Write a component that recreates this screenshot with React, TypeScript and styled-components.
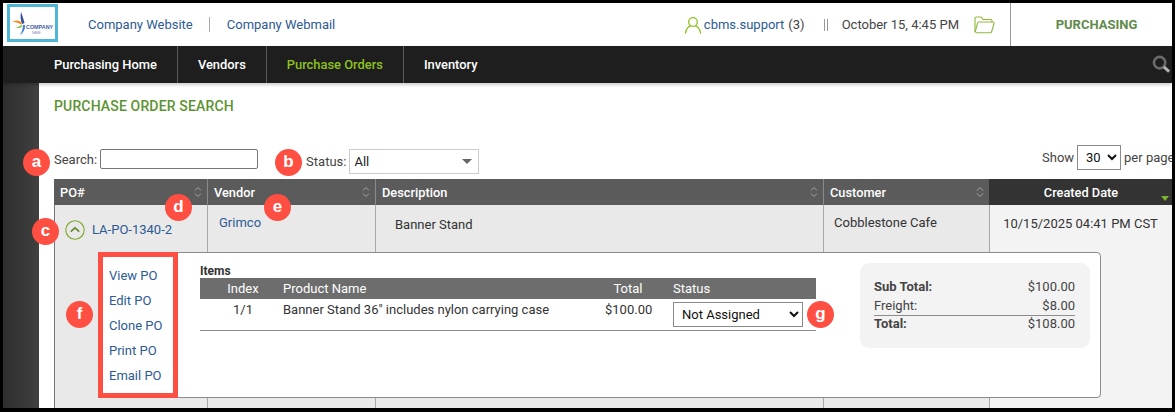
import { createGlobalStyle, styled } from 'styled-components';

const GlobalStyle = createGlobalStyle`
  html, body {
    margin: 0;
    padding: 0;
    background: #000;
  }
  body {
    font-family: Roboto, "Liberation Sans", sans-serif;
    font-size: 13px;
    color: #333;
  }
  * {
    box-sizing: border-box;
  }
`;

const Frame = styled.div`
  position: relative;
  width: 1175px;
  height: 412px;
  border: solid #000;
  border-width: 3px 3px 4px 3px;
  overflow: hidden;
  background: #fff;
  display: flex;
  flex-direction: column;
`;

const Header = styled.header`
  display: flex;
  align-items: center;
  height: 43px;
  flex: none;
`;

const LogoBox = styled.div`
  width: 51px;
  height: 38px;
  margin: 1px 0 0 4px;
  align-self: flex-start;
  border: 3px solid #4db6d4;
  background: #fff;
  overflow: hidden;
`;

const HeaderLink = styled.a<{ $divider?: boolean }>`
  color: #2c5a94;
  font-size: 13px;
  padding: ${(p) => (p.$divider ? '0 0 0 17px' : '0 16px 0 0')};
  border-left: ${(p) => (p.$divider ? '1px solid #aaa' : 'none')};
  line-height: 15px;
`;

const HeaderLinks = styled.div`
  display: flex;
  align-items: center;
  margin-left: 30px;
`;

const HeaderRight = styled.div`
  margin-left: auto;
  display: flex;
  align-items: center;
  height: 100%;
`;

const UserName = styled.a`
  color: #2c5a94;
  font-size: 13px;
  margin-left: 2px;
`;

const UserCount = styled.span`
  color: #444;
  font-size: 13px;
  margin-left: 4px;
`;

const DoubleBar = styled.span`
  width: 4px;
  height: 12px;
  margin: 0 14px 0 19px;
  border-left: 1px solid #999;
  border-right: 1px solid #999;
`;

const DateText = styled.span`
  color: #444;
  font-size: 13px;
  margin-right: 15px;
`;

const ModuleName = styled.div`
  width: 162px;
  height: 100%;
  margin-left: 15px;
  padding-left: 10px;
  border-left: 1px solid #999;
  display: flex;
  align-items: center;
  justify-content: center;
  color: #5f8b4c;
  font-size: 13px;
  font-weight: 700;
`;

const NavBar = styled.nav`
  height: 37px;
  flex: none;
  background: #1e1e1e;
  display: flex;
  align-items: stretch;
  box-shadow: 0 2px 3px rgba(0, 0, 0, 0.2);
  z-index: 1;
  padding-left: 31px;
`;

const NavItem = styled.a<{ $active?: boolean; $last?: boolean }>`
  display: flex;
  align-items: center;
  padding: 0 20px;
  color: ${(p) => (p.$active ? '#8dc21f' : '#fff')};
  font-size: 12.9px;
  font-weight: 500;
  border-right: ${(p) => (p.$last ? 'none' : '1px solid #5a5a5a')};
`;

const NavSearch = styled.div`
  margin-left: auto;
  margin-right: 1px;
  display: flex;
  align-items: center;
`;

const Layout = styled.div`
  flex: 1;
  display: flex;
  min-height: 0;
`;

const SideRail = styled.aside`
  width: 36px;
  flex: none;
  background: linear-gradient(90deg, #2e2e2e, #404040);
`;

const Main = styled.main`
  position: relative;
  flex: 1;
  min-width: 0;
  padding: 0 0 0 15px;
  display: flex;
  flex-direction: column;
`;

const Title = styled.h1`
  margin: 15px 0 0;
  font-size: 14px;
  line-height: 16px;
  font-weight: 500;
  letter-spacing: 0.15px;
  color: #5c9330;
`;

const Filters = styled.div`
  display: flex;
  align-items: flex-start;
  height: 31px;
  margin-top: 34px;
`;

const FilterLabel = styled.label`
  font-size: 13px;
  color: #444;
  line-height: 15px;
`;

const SearchField = styled.div`
  display: flex;
  align-items: center;
  gap: 3px;
  height: 22px;
`;

const SearchInput = styled.div`
  width: 158px;
  height: 20px;
  border: 1px solid #767676;
  border-radius: 2px;
  background: #fff;
`;

const StatusField = styled.div`
  display: flex;
  align-items: center;
  gap: 3px;
  margin-left: 48px;
  height: 26px;
`;

const StatusSelect = styled.div`
  width: 130px;
  height: 25px;
  border: 1px solid #ccc;
  display: flex;
  align-items: center;
  justify-content: space-between;
  padding: 0 6px 0 4px;
  font-size: 13px;
  color: #222;
  &::after {
    content: '';
    border: 5px solid transparent;
    border-top: 5px solid #666;
    border-bottom: 0;
  }
`;

const PerPage = styled.div`
  margin-left: auto;
  display: flex;
  align-items: center;
  gap: 3px;
  margin-top: -4px;
  height: 26px;
  white-space: nowrap;
  width: 130px;
  font-size: 13px;
  color: #444;
`;

const NativeSelect = styled.select<{ $w: number; $h: number; $fs: number }>`
  width: ${(p) => p.$w}px;
  height: ${(p) => p.$h}px;
  flex: none;
  font-family: Roboto, "Liberation Sans", sans-serif;
  font-size: ${(p) => p.$fs}px;
  border: 1px solid #8a8a8a;
  border-radius: 0;
  background: #fff;
  color: #111;
  padding: 0 0 0 4px;
`;

const GRID = '153px 168px 448px 166px 183px';

const TableHead = styled.div`
  display: grid;
  grid-template-columns: ${GRID};
  height: 26px;
  flex: none;
`;

const HeadCell = styled.div<{ $sorted?: boolean }>`
  display: flex;
  align-items: center;
  justify-content: ${(p) => (p.$sorted ? 'center' : 'space-between')};
  position: relative;
  padding: 0 5px 0 6px;
  background: ${(p) => (p.$sorted ? '#333' : '#5b5b5b')};
  color: #fff;
  font-size: 12.8px;
  font-weight: 500;
  border-left: ${(p) => (p.$sorted ? 'none' : '1px solid #8a8a8a')};
  &:first-child {
    border-left: none;
  }
`;

const SortedMark = styled.span`
  position: absolute;
  right: 3px;
  bottom: 4px;
  border: 4px solid transparent;
  border-top: 5px solid #7ab32e;
  border-bottom: 0;
`;

const TableBody = styled.div`
  position: relative;
  flex: 1;
  display: grid;
  grid-template-columns: ${GRID};
`;

const BodyCell = styled.div<{ $sorted?: boolean; $center?: boolean }>`
  background: ${(p) => (p.$sorted ? '#f3f3f3' : '#e9e9e9')};
  border-left: 1px solid #a8a8a8;
  font-size: 13px;
  color: #333;
  text-align: ${(p) => (p.$center ? 'center' : 'left')};
  &:first-child {
    border-left: 1px solid #777;
  }
  &:last-child {
    border-left: none;
  }
`;

const PoCell = styled.div`
  display: flex;
  align-items: center;
  gap: 7px;
  padding: 15px 0 0 10px;
`;

const ExpandToggle = styled.span`
  width: 20px;
  height: 20px;
  display: block;
`;

const BlueLink = styled.a`
  color: #2c5a94;
  font-size: 13px;
  line-height: 16px;
`;

const VendorText = styled.div`
  padding: 10px 0 0 11px;
  line-height: 16px;
`;

const DescriptionText = styled.div`
  padding: 12px 0 0 19px;
  line-height: 16px;
`;

const CustomerText = styled.div`
  padding: 10px 0 0 10px;
  line-height: 16px;
`;

const DateCellText = styled.div`
  padding: 11px 0 0 0;
  margin-right: 1px;
  line-height: 16px;
`;

const DetailPanel = styled.div`
  position: absolute;
  left: 44px;
  top: 47px;
  width: 1003px;
  height: 146px;
  background: #fff;
  border: 1px solid #8c8c8c;
  border-radius: 0 4px 4px 0;
  display: flex;
  z-index: 1;
`;

const ActionBox = styled.div`
  width: 80px;
  flex: none;
  margin: -1px 0 -1px -1px;
  border: 5px solid #ff4f42;
  display: flex;
  flex-direction: column;
  gap: 9px;
  padding: 11px 0 0 6px;
  background: #fff;
`;

const ActionLink = styled(BlueLink)`
  line-height: 16px;
`;

const ItemsBlock = styled.div`
  width: 616px;
  margin: 11px 0 0 22px;
  flex: none;
`;

const ItemsTitle = styled.div`
  font-size: 12px;
  font-weight: 700;
  line-height: 14px;
  color: #333;
`;

const ITEM_GRID = '83px 322px 46px 1fr';

const ItemsHead = styled.div`
  display: grid;
  grid-template-columns: ${ITEM_GRID};
  align-items: center;
  height: 21px;
  background: #6d6d6d;
  color: #fff;
  font-size: 13px;
`;

const ItemsRow = styled.div`
  display: grid;
  grid-template-columns: ${ITEM_GRID};
  height: 32px;
  border-bottom: 1px solid #8c8c8c;
  font-size: 13px;
  color: #333;
`;

const ItemIndex = styled.div`
  padding: 3px 0 0 3px;
  text-align: center;
  line-height: 16px;
`;

const ItemName = styled.div`
  padding-top: 3px;
  line-height: 16px;
  white-space: nowrap;
`;

const ItemTotal = styled.div`
  padding-top: 3px;
  text-align: center;
  line-height: 16px;
  white-space: nowrap;
`;

const HeadIndex = styled.div`
  padding-left: 3px;
  text-align: center;
`;

const HeadTotal = styled.div`
  text-align: center;
`;

const HeadStatus = styled.div`
  padding-left: 22px;
`;

const StatusCell = styled.div`
  padding: 3px 0 0 22px;
`;

const Totals = styled.div`
  width: 230px;
  height: 85px;
  margin: 10px 0 0 44px;
  flex: none;
  background: #f3f3f3;
  border-radius: 9px;
  padding: 15px 15px 0 14px;
  font-size: 13px;
  color: #444;
`;

const TotalRow = styled.div<{ $rule?: boolean }>`
  display: flex;
  justify-content: space-between;
  height: ${(p) => (p.$rule ? '19px' : '18.5px')};
  line-height: ${(p) => (p.$rule ? '15px' : '18px')};
  border-top: ${(p) => (p.$rule ? '1px solid #8c8c8c' : 'none')};
`;

const TotalLabel = styled.span<{ $strong?: boolean }>`
  font-weight: ${(p) => (p.$strong ? 700 : 400)};
`;

const Badge = styled.span<{ $x: number; $y: number }>`
  position: absolute;
  left: ${(p) => p.$x}px;
  top: ${(p) => p.$y}px;
  width: 27px;
  height: 27px;
  border-radius: 50%;
  background: #ff4f42;
  color: #fff;
  display: flex;
  align-items: center;
  justify-content: center;
  font-family: "Liberation Sans", Arial, sans-serif;
  font-size: 17px;
  font-weight: 700;
  line-height: 1;
  padding-bottom: 2px;
  z-index: 2;
`;

function LogoMark() {
  return (
    <svg width="45" height="32" viewBox="0 0 45 32" style={{ display: 'block' }}>
      <path d="M11 5 C10 10 11 14 12 17 L14.5 16 C13.5 12 12.5 9 11 5Z" fill="#2f4f9e" />
      <path d="M2 15 C6 12.5 10 13 12 16 L11 17.5 C8 15.5 5 15 2 15Z" fill="#f0902a" />
      <path d="M10 28 C12 25 13 21 13 18 L15 18 C15.5 22 13 26 10 28Z" fill="#3f7fd0" />
      <path d="M5 20 C8 20.5 10 19.5 11.5 17.5 L12 19.5 C10 21.5 7.5 21.5 5 20Z" fill="#7cc242" />
      <text x="16" y="22" fontFamily="Liberation Sans, sans-serif" fontSize="5.4" fontWeight="700" fill="#3f5fa8">
        COMPANY
      </text>
      <text x="22" y="27" fontFamily="Liberation Sans, sans-serif" fontSize="3" fill="#7a8ab8">
        NAME
      </text>
    </svg>
  );
}

function UserIcon() {
  return (
    <svg width="18" height="18" viewBox="0 0 18 18" fill="none" stroke="#8dc21f" strokeWidth="1.3">
      <circle cx="9" cy="6" r="4.3" />
      <path d="M1.5 17 C2 12.5 5 10.3 6.4 10 M16.5 17 C16 12.5 13 10.3 11.6 10" strokeLinecap="round" />
    </svg>
  );
}

function FolderIcon() {
  return (
    <svg width="21" height="18" viewBox="0 0 21 18" fill="none" stroke="#8fb83a" strokeWidth="1.1" strokeLinejoin="round">
      <path d="M1 16 V2.5 C1 1.6 1.6 1 2.5 1 H7 L9 3.5 H17 C17.8 3.5 18 4 18 5 V6" />
      <path d="M1 16.5 L3.5 7.5 C3.7 6.5 4 6 5 6 H19 C20 6 20.3 6.7 20 7.5 L17.7 15.5 C17.4 16.5 17 16.8 16 16.8 H1.8" />
    </svg>
  );
}

function SearchIcon() {
  return (
    <svg width="19" height="19" viewBox="0 0 20 20" fill="none">
      <circle cx="8" cy="8" r="6" stroke="#6a6a6a" strokeWidth="2.8" />
      <path d="M12.5 12.5 L18 17.5" stroke="#b5b5b5" strokeWidth="3" />
    </svg>
  );
}

function SortIcon() {
  return (
    <svg width="8" height="12" viewBox="0 0 8 12" fill="none" stroke="#a5a5a5" strokeWidth="1">
      <path d="M1 4.5 L4 1.5 L7 4.5" />
      <path d="M1 7.5 L4 10.5 L7 7.5" />
    </svg>
  );
}

function ChevronCircle() {
  return (
    <ExpandToggle>
      <svg width="20" height="20" viewBox="0 0 20 20" fill="none" stroke="#7fa82e">
        <circle cx="10" cy="10" r="9.2" strokeWidth="1.1" />
        <path d="M5.8 11.6 L10 7.8 L14.2 11.6" stroke="#5f8a28" strokeWidth="1.6" />
      </svg>
    </ExpandToggle>
  );
}

const actions = ['View PO', 'Edit PO', 'Clone PO', 'Print PO', 'Email PO'];

const navItems = ['Purchasing Home', 'Vendors', 'Purchase Orders', 'Inventory'];

const columns = ['PO#', 'Vendor', 'Description', 'Customer'];

export default function App() {
  return (
    <>
      <GlobalStyle />
      <Frame>
        <Header>
          <LogoBox>
            <LogoMark />
          </LogoBox>
          <HeaderLinks>
            <HeaderLink>Company Website</HeaderLink>
            <HeaderLink $divider>Company Webmail</HeaderLink>
          </HeaderLinks>
          <HeaderRight>
            <UserIcon />
            <UserName>cbms.support</UserName>
            <UserCount>(3)</UserCount>
            <DoubleBar />
            <DateText>October 15, 4:45 PM</DateText>
            <FolderIcon />
            <ModuleName>PURCHASING</ModuleName>
          </HeaderRight>
        </Header>
        <NavBar>
          {navItems.map((item, i) => (
            <NavItem key={item} $active={item === 'Purchase Orders'} $last={i === navItems.length - 1}>
              {item}
            </NavItem>
          ))}
          <NavSearch>
            <SearchIcon />
          </NavSearch>
        </NavBar>
        <Layout>
          <SideRail />
          <Main>
            <Title>PURCHASE ORDER SEARCH</Title>
            <Filters>
              <SearchField>
                <FilterLabel>Search:</FilterLabel>
                <SearchInput />
              </SearchField>
              <StatusField>
                <FilterLabel>Status:</FilterLabel>
                <StatusSelect>All</StatusSelect>
              </StatusField>
              <PerPage>
                Show
                <NativeSelect $w={44} $h={25} $fs={13} defaultValue="30">
                  <option>30</option>
                </NativeSelect>
                per page
              </PerPage>
            </Filters>
            <TableHead>
              {columns.map((col) => (
                <HeadCell key={col}>
                  {col}
                  <SortIcon />
                </HeadCell>
              ))}
              <HeadCell $sorted>
                Created Date
                <SortedMark />
              </HeadCell>
            </TableHead>
            <TableBody>
              <BodyCell>
                <PoCell>
                  <ChevronCircle />
                  <BlueLink>LA-PO-1340-2</BlueLink>
                </PoCell>
              </BodyCell>
              <BodyCell>
                <VendorText>
                  <BlueLink>Grimco</BlueLink>
                </VendorText>
              </BodyCell>
              <BodyCell>
                <DescriptionText>Banner Stand</DescriptionText>
              </BodyCell>
              <BodyCell>
                <CustomerText>Cobblestone Cafe</CustomerText>
              </BodyCell>
              <BodyCell $sorted $center>
                <DateCellText>10/15/2025 04:41 PM CST</DateCellText>
              </BodyCell>
              <DetailPanel>
                <ActionBox>
                  {actions.map((a) => (
                    <ActionLink key={a}>{a}</ActionLink>
                  ))}
                </ActionBox>
                <ItemsBlock>
                  <ItemsTitle>Items</ItemsTitle>
                  <ItemsHead>
                    <HeadIndex>Index</HeadIndex>
                    <div>Product Name</div>
                    <HeadTotal>Total</HeadTotal>
                    <HeadStatus>Status</HeadStatus>
                  </ItemsHead>
                  <ItemsRow>
                    <ItemIndex>1/1</ItemIndex>
                    <ItemName>Banner Stand 36" includes nylon carrying case</ItemName>
                    <ItemTotal>$100.00</ItemTotal>
                    <StatusCell>
                      <NativeSelect $w={130} $h={25} $fs={13} defaultValue="Not Assigned">
                        <option>Not Assigned</option>
                      </NativeSelect>
                    </StatusCell>
                  </ItemsRow>
                </ItemsBlock>
                <Totals>
                  <TotalRow>
                    <TotalLabel $strong>Sub Total:</TotalLabel>
                    <span>$100.00</span>
                  </TotalRow>
                  <TotalRow>
                    <TotalLabel>Freight:</TotalLabel>
                    <span>$8.00</span>
                  </TotalRow>
                  <TotalRow $rule>
                    <TotalLabel $strong>Total:</TotalLabel>
                    <span>$108.00</span>
                  </TotalRow>
                </Totals>
              </DetailPanel>
            </TableBody>
          </Main>
        </Layout>
        <Badge $x={20} $y={146}>a</Badge>
        <Badge $x={272} $y={146}>b</Badge>
        <Badge $x={29} $y={215}>c</Badge>
        <Badge $x={162} $y={191}>d</Badge>
        <Badge $x={261} $y={191}>e</Badge>
        <Badge $x={63} $y={298}>f</Badge>
        <Badge $x={804} $y={298}>g</Badge>
      </Frame>
    </>
  );
}
